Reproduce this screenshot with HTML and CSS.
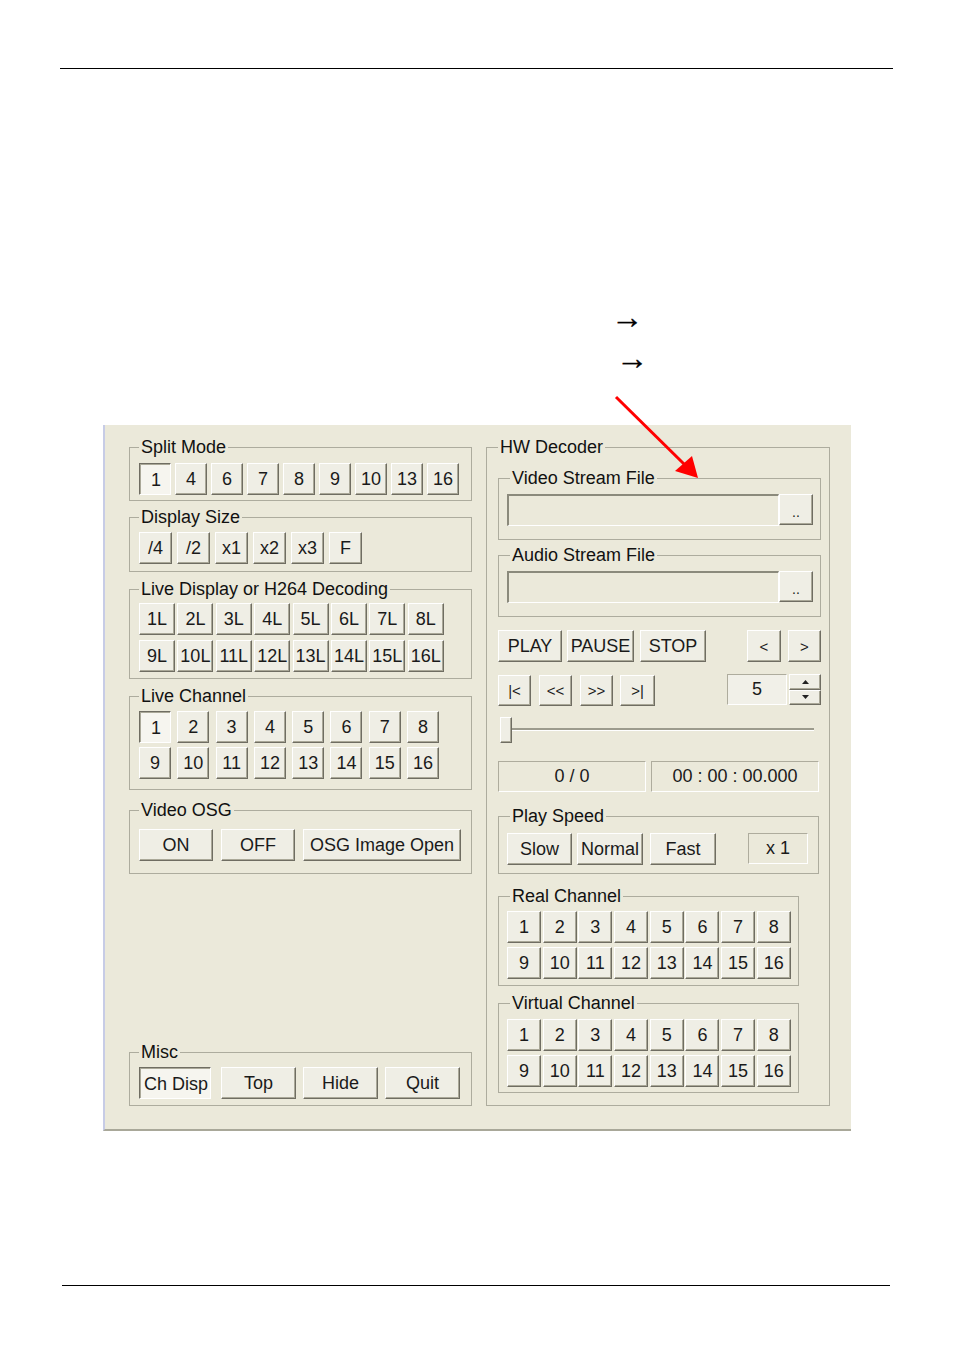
FILE: index.html
```html
<!DOCTYPE html>
<html lang="en">
<head>
<meta charset="utf-8">
<title>HW Decoder</title>
<link rel="stylesheet" href="styles.css">
</head>
<body>
<div class="page">
  <div class="rule rule-top"></div>
  <div class="arrow-line arrow-a">→</div>
  <div class="arrow-line arrow-b">→</div>

  <div class="window">
    <div class="col left">
      <fieldset class="grp g-split">
        <legend>Split Mode</legend>
        <div class="row r-split">
          <button class="btn down">1</button><button class="btn">4</button><button class="btn">6</button><button class="btn">7</button><button class="btn">8</button><button class="btn">9</button><button class="btn">10</button><button class="btn">13</button><button class="btn">16</button>
        </div>
      </fieldset>

      <fieldset class="grp g-disp">
        <legend>Display Size</legend>
        <div class="row r-disp">
          <button class="btn">/4</button><button class="btn">/2</button><button class="btn">x1</button><button class="btn">x2</button><button class="btn">x3</button><button class="btn">F</button>
        </div>
      </fieldset>

      <fieldset class="grp g-live">
        <legend>Live Display or H264 Decoding</legend>
        <div class="grid-live">
          <button class="btn">1L</button><button class="btn">2L</button><button class="btn">3L</button><button class="btn">4L</button><button class="btn">5L</button><button class="btn">6L</button><button class="btn">7L</button><button class="btn">8L</button>
          <button class="btn">9L</button><button class="btn">10L</button><button class="btn">11L</button><button class="btn">12L</button><button class="btn">13L</button><button class="btn">14L</button><button class="btn">15L</button><button class="btn">16L</button>
        </div>
      </fieldset>

      <fieldset class="grp g-chan">
        <legend>Live Channel</legend>
        <div class="grid-chan">
          <button class="btn down">1</button><button class="btn">2</button><button class="btn">3</button><button class="btn">4</button><button class="btn">5</button><button class="btn">6</button><button class="btn">7</button><button class="btn">8</button>
          <button class="btn">9</button><button class="btn">10</button><button class="btn">11</button><button class="btn">12</button><button class="btn">13</button><button class="btn">14</button><button class="btn">15</button><button class="btn">16</button>
        </div>
      </fieldset>

      <fieldset class="grp g-osg">
        <legend>Video OSG</legend>
        <div class="row r-osg">
          <button class="btn b-on">ON</button><button class="btn b-off">OFF</button><button class="btn b-img">OSG Image Open</button>
        </div>
      </fieldset>

      <fieldset class="grp g-misc">
        <legend>Misc</legend>
        <div class="row r-misc">
          <button class="btn down b-ch">Ch Disp</button><button class="btn b-top">Top</button><button class="btn b-hide">Hide</button><button class="btn b-quit">Quit</button>
        </div>
      </fieldset>
    </div>

    <div class="col right">
      <fieldset class="grp hw">
        <legend>HW Decoder</legend>

        <fieldset class="grp inner file">
          <legend>Video Stream File</legend>
          <div class="row">
            <div class="textbox"></div><button class="btn b-browse">..</button>
          </div>
        </fieldset>

        <fieldset class="grp inner file file2">
          <legend>Audio Stream File</legend>
          <div class="row">
            <div class="textbox"></div><button class="btn b-browse">..</button>
          </div>
        </fieldset>

        <div class="row r-play">
          <button class="btn b-play">PLAY</button><button class="btn b-pause">PAUSE</button><button class="btn b-stop">STOP</button><button class="btn b-prev">&lt;</button><button class="btn b-next">&gt;</button>
        </div>

        <div class="row r-nav">
          <button class="btn small b-first">|&lt;</button><button class="btn small b-rew">&lt;&lt;</button><button class="btn small b-ff">&gt;&gt;</button><button class="btn small b-last">&gt;|</button>
          <div class="field num">5</div>
          <div class="spin">
            <button class="btn spin-btn"><svg width="7" height="4" viewBox="0 0 7 4"><path d="M3.5 0 L7 4 L0 4 Z" fill="#222"/></svg></button>
            <button class="btn spin-btn"><svg width="7" height="4" viewBox="0 0 7 4"><path d="M0 0 L7 0 L3.5 4 Z" fill="#222"/></svg></button>
          </div>
        </div>

        <div class="slider">
          <div class="track"></div>
          <div class="thumb"></div>
        </div>

        <div class="row r-status">
          <div class="field st-count">0 / 0</div>
          <div class="field st-time">00 : 00 : 00.000</div>
        </div>

        <fieldset class="grp inner speed">
          <legend>Play Speed</legend>
          <div class="row">
            <button class="btn b-slow">Slow</button><button class="btn b-normal">Normal</button><button class="btn b-fast">Fast</button>
            <div class="field mult">x 1</div>
          </div>
        </fieldset>

        <fieldset class="grp inner chgrp real">
          <legend>Real Channel</legend>
          <div class="grid-hw">
            <button class="btn">1</button><button class="btn">2</button><button class="btn">3</button><button class="btn">4</button><button class="btn">5</button><button class="btn">6</button><button class="btn">7</button><button class="btn">8</button>
            <button class="btn">9</button><button class="btn">10</button><button class="btn">11</button><button class="btn">12</button><button class="btn">13</button><button class="btn">14</button><button class="btn">15</button><button class="btn">16</button>
          </div>
        </fieldset>

        <fieldset class="grp inner chgrp virt">
          <legend>Virtual Channel</legend>
          <div class="grid-hw">
            <button class="btn">1</button><button class="btn">2</button><button class="btn">3</button><button class="btn">4</button><button class="btn">5</button><button class="btn">6</button><button class="btn">7</button><button class="btn">8</button>
            <button class="btn">9</button><button class="btn">10</button><button class="btn">11</button><button class="btn">12</button><button class="btn">13</button><button class="btn">14</button><button class="btn">15</button><button class="btn">16</button>
          </div>
        </fieldset>
      </fieldset>
    </div>
  </div>

  <div class="rule rule-bottom"></div>

  <svg class="red-arrow" width="954" height="1352" viewBox="0 0 954 1352">
    <line x1="616" y1="397" x2="684" y2="464" stroke="#ff0000" stroke-width="3"/>
    <polygon points="698,478 675,471 692,456" fill="#ff0000"/>
  </svg>
</div>
</body>
</html>
```

FILE: styles.css
```css
* { box-sizing: border-box; }

html, body {
  margin: 0;
  padding: 0;
  background: #ffffff;
}

body {
  font-family: "Liberation Sans", Arial, sans-serif;
  color: #111;
}

.page {
  position: relative;
  width: 954px;
  height: 1352px;
  padding-top: 68px;
  overflow: hidden;
}

.rule {
  height: 0;
  border-top: 1px solid #000;
}

.rule-top {
  margin-left: 60px;
  width: 833px;
}

.rule-bottom {
  margin-top: 154px;
  margin-left: 62px;
  width: 828px;
}

.arrow-line {
  font-family: "Liberation Sans", "DejaVu Sans", sans-serif;
  font-size: 32px;
  line-height: 41px;
  height: 41px;
  color: #000;
  -webkit-text-stroke: 0.4px #000;
}

.arrow-a { margin: 228px 0 0 611px; }
.arrow-b { margin-left: 616px; }

/* ---------- window ---------- */
.window {
  margin: 46px 0 0 103px;
  width: 748px;
  height: 706px;
  background: #ebe9da;
  border-left: 2px solid #c7cce6;
  border-bottom: 2px solid #a9a899;
  display: flex;
  gap: 14px;
  padding: 12px 21px 23px 24px;
}

.col {
  display: flex;
  flex-direction: column;
}

.left { width: 343px; }
.right { width: 344px; }

.grp {
  margin: 0;
  min-width: 0;
  border: 1px solid #adac9e;
  padding: 0 8px 6px 9px;
}

.grp > legend {
  padding: 0 2px;
  font-size: 18px;
  line-height: 20px;
  color: #111;
}

.row {
  display: flex;
  align-items: flex-start;
}

/* ---------- buttons ---------- */
.btn {
  margin: 0;
  padding: 0;
  height: 32px;
  font: inherit;
  font-size: 18px;
  color: #1a1a1a;
  background: #efeee5;
  border: 1px solid;
  border-color: #ffffff #6f6d62 #6f6d62 #ffffff;
  box-shadow: inset -1px -1px 0 #aaa898;
  display: flex;
  align-items: center;
  justify-content: center;
  white-space: nowrap;
  flex: none;
}

.btn.down {
  background: #f6f5ef;
  border-color: #6f6d62 #ffffff #ffffff #6f6d62;
  box-shadow: inset 1px 1px 0 #aaa898;
  padding-left: 2px;
  padding-top: 2px;
}

.field {
  height: 31px;
  font-size: 18px;
  color: #1a1a1a;
  border: 1px solid;
  border-color: #aeac9d #ffffff #ffffff #aeac9d;
  display: flex;
  align-items: center;
  justify-content: center;
  flex: none;
}

/* ---------- left column ---------- */
.g-split { padding-top: 6px; padding-bottom: 5px; }
.r-split { gap: 4px; }
.r-split .btn { width: 32px; }

.g-disp { margin-top: 6px; padding-top: 5px; padding-bottom: 7px; }
.r-disp { gap: 5px; }
.r-disp .btn { width: 33px; }

.g-live { margin-top: 7px; padding-top: 4px; padding-bottom: 6px; }
.grid-live {
  display: grid;
  grid-template-columns: repeat(8, 36px);
  column-gap: 2.4px;
  row-gap: 5px;
}

.g-chan { margin-top: 7px; padding-top: 5px; padding-bottom: 10px; }
.grid-chan {
  display: grid;
  grid-template-columns: repeat(8, 32px);
  column-gap: 6.3px;
  row-gap: 4px;
}

.g-osg { margin-top: 10px; padding-top: 9px; padding-bottom: 12px; }
.b-on { width: 74px; }
.b-off { width: 74px; margin-left: 8px; }
.b-img { width: 158px; margin-left: 8px; }

.g-misc { margin-top: auto; padding-top: 5px; padding-bottom: 6px; }
.b-ch { width: 72px; }
.b-top { width: 75px; margin-left: 10px; }
.b-hide { width: 75px; margin-left: 7px; }
.b-quit { width: 75px; margin-left: 7px; }

/* ---------- right column ---------- */
.hw {
  flex: 1;
  padding: 11px 8px 0 11px;
}

.inner > legend { margin-left: 3px; }

.file { padding: 6px 7px 13px 8px; }
.file2 { margin-top: 5px; }

.textbox {
  width: 272px;
  height: 32px;
  border-top: 2px solid #8b8a7c;
  border-left: 2px solid #8b8a7c;
  border-right: 1px solid #ffffff;
  border-bottom: 1px solid #ffffff;
  background: #ebe9da;
}

.b-browse {
  width: 34px;
  height: 31px;
  font-size: 14px;
  padding-top: 4px;
}

.r-play { margin-top: 13px; }
.b-play { width: 64px; }
.b-pause { width: 67px; margin-left: 5px; }
.b-stop { width: 66px; margin-left: 6px; }
.b-prev { width: 34px; margin-left: auto; font-size: 15px; }
.b-next { width: 33px; margin-left: 7px; font-size: 15px; }

.r-nav { margin-top: 13px; align-items: flex-start; }
.btn.small { height: 31px; font-size: 15px; }
.b-first { width: 33px; }
.b-rew { width: 33px; margin-left: 8px; }
.b-ff { width: 33px; margin-left: 8px; }
.b-last { width: 35px; margin-left: 7px; }

.num {
  width: 60px;
  margin-left: auto;
  margin-top: -1px;
  background: #f1f0e8;
}

.spin {
  width: 32px;
  height: 31px;
  margin-left: 2px;
  margin-top: -1px;
  display: flex;
  flex-direction: column;
}

.spin-btn {
  width: 32px;
  height: 15.5px;
}

.slider {
  position: relative;
  margin-top: 7px;
  padding-top: 15px;
  height: 32px;
}

.track {
  margin-left: 2px;
  width: 314px;
  height: 3px;
  border-top: 2px solid #9c9b8d;
  border-bottom: 1px solid #ffffff;
}

.thumb {
  position: absolute;
  left: 2px;
  top: 4px;
  width: 12px;
  height: 26px;
  background: #efeee5;
  border: 1px solid;
  border-color: #ffffff #6f6d62 #6f6d62 #ffffff;
  box-shadow: inset -1px -1px 0 #aaa898;
}

.r-status { margin-top: 16px; }
.st-count { width: 148px; }
.st-time { width: 168px; margin-left: 5px; }

.speed {
  width: 321px;
  margin-top: 14px;
  padding: 7px 7px 8px 8px;
}
.b-slow { width: 65px; }
.b-normal { width: 66px; margin-left: 5px; }
.b-fast { width: 66px; margin-left: 7px; }
.mult { width: 60px; margin-left: 32px; }

.chgrp {
  width: 301px;
  padding: 5px 0 6px 8px;
}
.real { margin-top: 12px; }
.virt { margin-top: 7px; padding-top: 6px; padding-bottom: 5px; }

.grid-hw {
  display: grid;
  grid-template-columns: repeat(8, 34px);
  column-gap: 1.7px;
  row-gap: 4px;
}

/* ---------- annotation overlay ---------- */
.red-arrow {
  position: absolute;
  left: 0;
  top: 0;
  pointer-events: none;
}
```
